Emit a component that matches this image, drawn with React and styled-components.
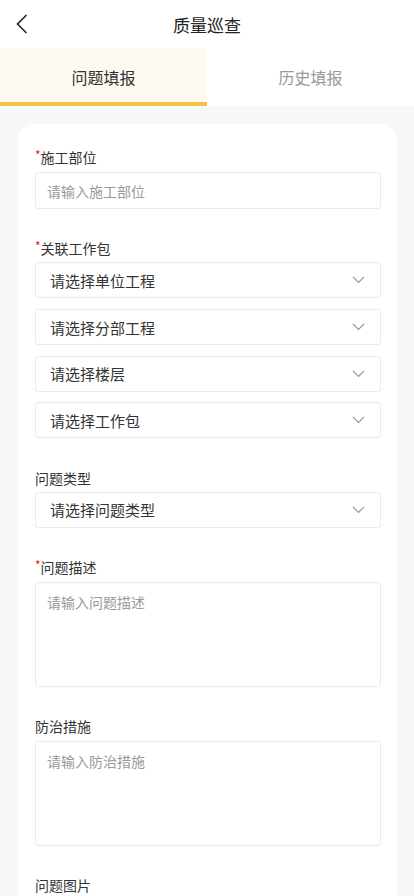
import React from 'react';
import styled, { createGlobalStyle } from 'styled-components';

const GlobalStyle = createGlobalStyle`
    html, body {
        margin: 0;
        padding: 0;
        background: #f7f8fa;
        font-family: "Noto Sans CJK SC", "Noto Sans", sans-serif;
        -webkit-font-smoothing: antialiased;
    }
    * {
        box-sizing: border-box;
    }
`;

const Page = styled.div`
    width: 414px;
    min-height: 896px;
    background: #f7f8fa;
`;

const NavBar = styled.header`
    position: relative;
    height: 48px;
    display: flex;
    align-items: center;
    justify-content: center;
    background: #fff;
`;

const BackButton = styled.button`
    position: absolute;
    left: 10px;
    top: 12px;
    width: 24px;
    height: 24px;
    padding: 0;
    border: 0;
    background: none;
    display: flex;
    align-items: center;
    justify-content: center;
`;

const Title = styled.h1`
    margin: 0;
    font-size: 17px;
    font-weight: 400;
    color: #222;
`;

const Tabs = styled.div`
    display: flex;
    height: 58px;
    background: #fff;
`;

const Tab = styled.div`
    flex: 1;
    display: flex;
    align-items: center;
    justify-content: center;
    font-size: 16px;
    color: ${(p) => (p.active ? '#333' : '#999')};
    background: ${(p) => (p.active ? '#fffaf1' : '#fff')};
    border-bottom: 4px solid ${(p) => (p.active ? '#f7c244' : 'transparent')};
    padding-top: 4px;
`;

const Body = styled.main`
    padding: 18px 17px 0 18px;
`;

const Card = styled.section`
    background: #fff;
    border-radius: 16px 16px 0 0;
    padding: 23px 16px 0 17px;
    min-height: 790px;
`;

const Field = styled.div`
    display: flex;
    flex-direction: column;
    margin-bottom: 29.4px;
`;

const Label = styled.div`
    height: 20px;
    line-height: 20px;
    font-size: 14px;
    color: #333;
    margin-bottom: ${(p) => (p.tight ? '4px' : '5px')};
`;

const Star = styled.span`
    display: inline-block;
    color: #e8161b;
    font-size: 12px;
    line-height: 12px;
    vertical-align: top;
    margin-top: 2px;
`;

const Input = styled.div`
    height: 37px;
    border: 1px solid #ebebeb;
    border-radius: 3px;
    padding: 0 11px;
    display: flex;
    align-items: center;
    font-size: 14px;
    color: #999;
`;

const SelectList = styled.div`
    display: flex;
    flex-direction: column;
    gap: 10.7px;
`;

const Select = styled.div`
    height: 36px;
    border: 1px solid #ebebeb;
    border-radius: 3px;
    padding: 0 15px 0 14px;
    display: flex;
    align-items: center;
    justify-content: space-between;
    font-size: 15px;
    color: #333;
`;

const TextArea = styled.div`
    height: 104.5px;
    border: 1px solid #ebebeb;
    border-radius: 3px;
    padding: 9px 11px;
    font-size: 14px;
    line-height: 20px;
    color: #999;
`;

const Chevron = () => (
    <svg width="13" height="8" viewBox="0 0 13 8" fill="none">
        <path d="M1 1l5.5 5.5L12 1" stroke="#999" strokeWidth="1.2" />
    </svg>
);

const BackIcon = () => (
    <svg width="12" height="20" viewBox="0 0 12 20" fill="none">
        <path d="M10.5 1L1.5 10l9 9" stroke="#222" strokeWidth="1.6" />
    </svg>
);

const selects = ['请选择单位工程', '请选择分部工程', '请选择楼层', '请选择工作包'];

export default function App() {
    return (
        <Page>
            <GlobalStyle />
            <NavBar>
                <BackButton>
                    <BackIcon />
                </BackButton>
                <Title>质量巡查</Title>
            </NavBar>
            <Tabs>
                <Tab active>问题填报</Tab>
                <Tab>历史填报</Tab>
            </Tabs>
            <Body>
                <Card>
                    <Field>
                        <Label>
                            <Star>*</Star>施工部位
                        </Label>
                        <Input>请输入施工部位</Input>
                    </Field>
                    <Field>
                        <Label tight>
                            <Star>*</Star>关联工作包
                        </Label>
                        <SelectList>
                            {selects.map((s) => (
                                <Select key={s}>
                                    {s}
                                    <Chevron />
                                </Select>
                            ))}
                        </SelectList>
                    </Field>
                    <Field>
                        <Label tight>问题类型</Label>
                        <Select>
                            请选择问题类型
                            <Chevron />
                        </Select>
                    </Field>
                    <Field>
                        <Label>
                            <Star>*</Star>问题描述
                        </Label>
                        <TextArea>请输入问题描述</TextArea>
                    </Field>
                    <Field>
                        <Label>防治措施</Label>
                        <TextArea>请输入防治措施</TextArea>
                    </Field>
                    <Field>
                        <Label>问题图片</Label>
                    </Field>
                </Card>
            </Body>
        </Page>
    );
}
